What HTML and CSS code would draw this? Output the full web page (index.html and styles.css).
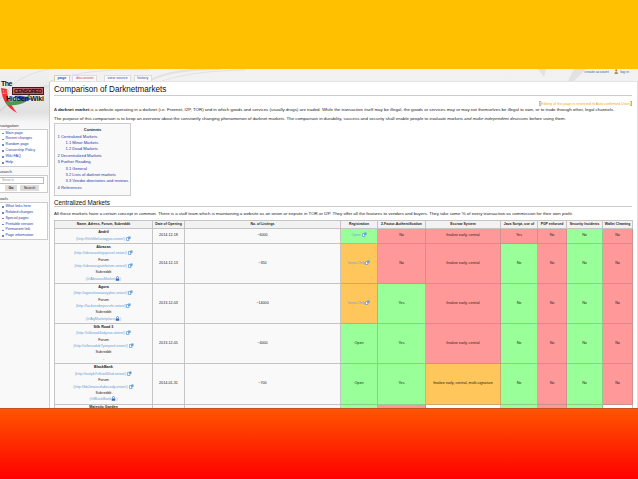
FILE: index.html
```html
<!DOCTYPE html>
<html>
  <head>
    <meta charset="utf-8">
    <meta name="viewport" content="width=device-width, initial-scale=1">
    <title>Comparison of Darknetmarkets</title>
    <link rel="stylesheet" href="styles.css">
  </head>
  <body>
    <svg class="defs" width="0" height="0">
      <symbol id="ext" viewBox="0 0 10 10">
        <path d="M1 3h5v6H1z" fill="#fff" stroke="#5b9bd5" stroke-width="1.4"/>
        <path d="M4 1h5v5L7.5 4.800 5 7 3.500 5.500 6 3z" fill="#5a98d8"/>
      </symbol>
      <symbol id="lock" viewBox="0 0 10 10">
        <path d="M3 5V3a2 2 0 0 1 4 0v2" fill="none" stroke="#4a80b8" stroke-width="1.4"/>
        <path d="M1.500 5h7v4.500h-7z" fill="#2f6fb0"/>
      </symbol>
    </svg>
    <div class="slide">
      <div class="band_top"></div>

      <div class="wiki">
        <svg class="swirl" viewBox="0 0 638 52" width="638" height="52">
          <g fill="none" stroke="#e2e2e2">
            <path d="M50 12C80 2 110 0 150 1"/>
            <path d="M148 12C165 4 185 0 220 0" stroke-width="2"/>
            <path d="M162 12C185 5 205 2 245 1"/>
            <path d="M0 30C14 10 30 4 50 0"/>
            <path d="M0 42C20 24 34 18 50 17" stroke-width="2"/>
          </g>
          <path d="M538 0h8l-2 8zM574 0h12l-12 12h-6z" fill="#e2e2e2"/>
        </svg>

        <!-- sidebar -->
        <div class="sidebar">
          <div class="logo">
            <svg viewBox="0 0 50 40" width="50" height="40">
              <path d="M1 9C2 22 8 29 17 34C10 25 7 18 7 10z" fill="#e33"/>
              <path d="M5 23C16 22 26 21 30 14C31 22 22 27 8 26z" fill="#4a9a50"/>
              <path d="M14 17C22 16 28 18 32 20L24 23z" fill="#4858b0"/>
              <rect x="12.500" y="8.500" width="31" height="7" fill="#b86468" stroke="#431a1c"/>
              <text x="14" y="14.200" textLength="28" class="logo_stamp">CENSORED</text>
              <text x="1" y="7.400" textLength="11.500" class="logo_txt">The</text>
              <text x="2" y="14.600" class="logo_17">1/2</text>
              <text x="6" y="22.400" textLength="38" class="logo_txt">Hidden Wiki</text>
            </svg>
          </div>
          <div class="side_title">navigation</div>
          <ul class="side_box">
            <li>Main page</li>
            <li>Recent changes</li>
            <li>Random page</li>
            <li>Censorship Policy</li>
            <li>Wiki FAQ</li>
            <li>Help</li>
          </ul>
          <div class="side_title">search</div>
          <div class="side_box side_search">
            <div class="search_input">Search</div>
            <div class="search_btns"><span class="btn btn_go">Go</span><span class="btn">Search</span></div>
          </div>
          <div class="side_title">tools</div>
          <ul class="side_box">
            <li>What links here</li>
            <li>Related changes</li>
            <li>Special pages</li>
            <li>Printable version</li>
            <li>Permanent link</li>
            <li>Page information</li>
          </ul>
        </div>

        <!-- page -->
        <div class="main">
          <div class="head">
            <div class="tabs">
              <span class="tab tab_on">page</span>
              <span class="tab tab_new">discussion</span>
              <span class="tab tab_source">view source</span>
              <span class="tab">history</span>
            </div>
            <div class="personal">
              <span>create account</span>
              <svg viewBox="0 0 10 12" width="4.500" height="5.500"><circle cx="5" cy="3" r="2.500" fill="#b98b4a"/><path d="M1 11c0-7 8-7 8 0z" fill="#a89060"/></svg>
              <span>log in</span>
            </div>
          </div>
          <div class="content">
            <h1>Comparison of Darknetmarkets</h1>
            <div class="notice"><b>[</b>Editing of this page is restricted to Auto confirmed Users<b>]</b></div>
            <p class="intro">A <b>darknet market</b> is a website operating in a darknet (i.e. Freenet, I2P, TOR) and in which goods and services (usually drugs) are traded. While the transaction itself may be illegal, the goods or services may or may not themselves be illegal to own, or to trade through other, legal channels.</p>
            <p class="purpose">The purpose of this comparison is to keep an overview about the constantly changing phenomenon of darknet markets. The comparison in durability, success and security shall enable people to evaluate markets <i>and make independent decisions</i> before using them.</p>
            <div class="toc">
              <div class="toc_title">Contents</div>
              <div>1 Centralized Markets</div>
              <div class="sub">1.1 Minor Markets</div>
              <div class="sub">1.2 Dead Markets</div>
              <div>2 Decentralized Markets</div>
              <div>3 Further Reading</div>
              <div class="sub">3.1 General</div>
              <div class="sub">3.2 Lists of darknet markets</div>
              <div class="sub">3.3 Vendor directories and reviews</div>
              <div>4 References</div>
            </div>
            <h2>Centralized Markets</h2>
            <p class="about">All these markets have a certain concept in common. There is a staff team which is maintaining a website as an onion or eepsite in TOR or I2P. They offer all the features to vendors and buyers. They take some % of every transaction as commission for their own profit.</p>
            <table class="markets">
              <colgroup>
                <col class="c_name"><col class="c_date"><col class="c_num"><col class="c_reg"><col class="c_fac">
                <col class="c_esc"><col class="c_js"><col class="c_pgp"><col class="c_sec"><col class="c_wal">
              </colgroup>
              <tr class="r_head">
                <th>Name, Adress, Forum, Subreddit</th><th>Date of Opening</th><th>No. of Listings</th><th>Registration</th><th>2-Factor-Authentification</th>
                <th>Escrow System</th><th>Java Script, use of</th><th>PGP enforced</th><th>Security Incidents</th><th>Wallet Cleaning</th>
              </tr>
              <tr class="r_short">
                <td><b>Andril</b><br><a>(http://hhhf6elseaqgox.onion/) <svg><use href="#ext"/></svg></a></td>
                <td>2014-12-18</td><td>~6000</td><td class="yes"><a>Open <svg><use href="#ext"/></svg></a></td><td class="no">No</td>
                <td class="no">finalize early, central</td><td class="no">Yes</td><td class="no">No</td><td class="yes">No</td><td class="no">No</td>
              </tr>
              <tr class="r_tall">
                <td><b>Abraxas</b><br><a>(http://abraxasdegupusel.onion/) <svg><use href="#ext"/></svg></a><br>Forum<br><a>(http://abraxasgateforum.onion/) <svg><use href="#ext"/></svg></a><br>Subreddit<br><a>(/r/AbraxasMarket<svg><use href="#lock"/></svg>)</a></td>
                <td>2014-12-13</td><td>~350</td><td class="part"><a>Invite-Only<svg><use href="#ext"/></svg></a></td><td class="no">No</td>
                <td class="no">finalize early, central</td><td class="yes">No</td><td class="no">No</td><td class="yes">No</td><td class="no">No</td>
              </tr>
              <tr class="r_tall">
                <td><b>Agora</b><br><a>(http://agorahooawayyfoe.onion/) <svg><use href="#ext"/></svg></a><br>Forum<br><a>(http://lacbzxobeprssrfx.onion/)<svg><use href="#ext"/></svg></a><br>Subreddit<br><a>(/r/AgMarketplace<svg><use href="#lock"/></svg>)</a></td>
                <td>2013-12-03</td><td>~14000</td><td class="part"><a>Invite-Only<svg><use href="#ext"/></svg></a></td><td class="yes">Yes</td>
                <td class="no">finalize early, central</td><td class="yes">No</td><td class="no">No</td><td class="yes">No</td><td class="no">No</td>
              </tr>
              <tr class="r_tall">
                <td><b>Silk Road 3</b><br><a>(http://silkroad4xdyzux.onion/) <svg><use href="#ext"/></svg></a><br>Forum<br><a>(http://silkroadvb7yvnpoof.onion/) <svg><use href="#ext"/></svg></a><br>Subreddit<br>-</td>
                <td>2013-12-05</td><td>~4000</td><td class="yes">Open</td><td class="yes">Yes</td>
                <td class="no">finalize early, central</td><td class="yes">No</td><td class="no">No</td><td class="yes">No</td><td class="no">No</td>
              </tr>
              <tr class="r_last">
                <td><b>BlackBank</b><br><a>(http://wztyb7vlfcw6l4xd.onion/) <svg><use href="#ext"/></svg></a><br>Forum<br><a>(http://bb2mwocdabesedy.onion/) <svg><use href="#ext"/></svg></a><br>Subreddit<br><a>(/r/BlackBank<svg><use href="#lock"/></svg>)</a></td>
                <td>2014-01-31</td><td>~700</td><td class="yes">Open</td><td class="yes">Yes</td>
                <td class="part">finalize early, central, multi-signature</td><td class="yes">No</td><td class="no">No</td><td class="yes">No</td><td class="no">No</td>
              </tr>
              <tr class="r_cut">
                <td><b>Majestic Garden</b></td><td></td><td></td><td class="yes"></td><td class="no"></td>
                <td class="blank"></td><td class="yes"></td><td class="no"></td><td class="yes"></td><td class="blank"></td>
              </tr>
            </table>
          </div>
        </div>
      </div>

      <div class="band_bottom"></div>
    </div>
  </body>
</html>
```

FILE: styles.css
```css
html, body{
  margin: 0;
  padding: 0;
  height: 100%;
  overflow: hidden;
}
.defs{
  position: absolute;
}
.slide{
  width: 638px;
  height: 479px;
  display: flex;
  flex-direction: column;
  font-family: "Liberation Sans", Arial, sans-serif;
  font-size: 4.4px;
  color: #222;
}
.band_top{
  height: 69px;
  background: #FFC000;
}
.band_bottom{
  flex: 1;
  background: linear-gradient(#FF5500, #FF0000);
}
.wiki{
  position: relative;
  height: 339px;
  display: flex;
  overflow: hidden;
  background: #f9f9f9 linear-gradient(#f1f1f1, #f4f4f4 50px, #f9f9f9 60px) no-repeat;
  border-bottom: 1px solid #c85020;
}
.swirl{
  position: absolute;
  left: 0;
  top: 0;
}
.sidebar{
  position: relative;
  width: 49px;
  flex: none;
  overflow: hidden;
  color: #333;
}
.logo{
  height: 53.5px;
  padding-top: 10px;
  box-sizing: border-box;
  background: linear-gradient(rgba(255,255,255,0), rgba(190,190,190,.35) 44px, rgba(249,249,249,0) 53px);
}
.logo svg{
  display: block;
}
.logo_txt{
  font-size: 7px;
  font-weight: bold;
  fill: #111;
}
.logo_stamp{
  font-size: 5.6px;
  font-weight: bold;
  fill: #1c0505;
}
.logo_17{
  font-size: 5.5px;
  fill: #f0a0a0;
}
.side_title{
  height: 6px;
  line-height: 6px;
  margin-left: -1px;
  font-size: 4.3px;
}
.side_box{
  margin: 0 0 2.5px -2px;
  padding: 1px 0 0;
  width: 47.5px;
  border: 1px solid #ccc;
  background: #fff;
  list-style: none;
  color: #2438a8;
  font-size: 3.7px;
}
.side_box li{
  height: 5.9px;
  line-height: 5.9px;
  padding-left: 6.5px;
  white-space: nowrap;
}
.side_box li::before{
  content: '';
  float: left;
  width: 1.6px;
  height: 1.6px;
  margin: 2.2px 0 0 -3.5px;
  background: #6a86c8;
}
.side_search{
  height: 15px;
}
.search_input{
  width: 41px;
  height: 4.5px;
  line-height: 4.5px;
  padding-left: 2px;
  border: 1px solid #bbb;
  color: #999;
}
.search_btns{
  display: flex;
  gap: 3px;
  padding: 1px 0 0 6px;
}
.btn{
  width: 19px;
  height: 6px;
  line-height: 6px;
  text-align: center;
  background: #ddd;
  color: #222;
}
.btn_go{
  width: 12px;
  font-weight: bold;
}
.main{
  position: relative;
  flex: 1;
  min-width: 0;
  display: flex;
  flex-direction: column;
}
.head{
  flex: none;
  height: 12px;
  display: flex;
  justify-content: space-between;
}
.tabs{
  display: flex;
  align-items: flex-end;
  gap: 2.5px;
  padding-left: 5px;
}
.tab{
  height: 5.5px;
  line-height: 5.5px;
  padding: 0 2.5px;
  border: 1px solid #ddd;
  border-bottom: none;
  background: #fafafa;
  color: #3a4cab;
  font-size: 3.8px;
}
.tab_on{
  border-color: #f0c890;
  font-weight: bold;
  background: #fff;
}
.tab_new{
  color: #c44;
}
.tab_source{
  margin-left: 4.5px;
}
.personal{
  display: flex;
  gap: 2px;
  height: 6px;
  line-height: 6px;
  padding-right: 9px;
  font-size: 3.7px;
  color: #2a7090;
}
.personal svg{
  margin-left: 3px;
}
.content{
  flex: 1;
  min-height: 0;
  padding: 0 5px 0 4px;
  border-left: 1px solid #ccc;
  border-top: 1px solid #e4e4e4;
  border-right: 1px solid #ddd;
  background: #fff;
}
.content p{
  margin: 0;
  white-space: nowrap;
}
h1{
  margin: 0;
  height: 13px;
  line-height: 15px;
  border-bottom: 1px solid #ccc;
  font-size: 8.15px;
  font-weight: normal;
  color: #111;
}
.notice{
  height: 6px;
  line-height: 6px;
  margin-top: 4px;
  text-align: right;
  font-size: 3.6px;
  color: #f5a623;
  white-space: nowrap;
}
.notice b{
  color: #a06a10;
  font-size: 5px;
}
.content .intro, .content .purpose{
  height: 8.5px;
  line-height: 8.5px;
}
.toc{
  width: 75px;
  height: 70.5px;
  border: 1px solid #ccc;
  background: #f9f9f9;
  color: #2438a8;
  font-size: 4.1px;
}
.toc div{
  height: 6.4px;
  line-height: 6.4px;
  padding-left: 2.5px;
  white-space: nowrap;
}
.toc .sub{
  padding-left: 10.5px;
}
.toc .toc_title{
  height: 9.6px;
  line-height: 11px;
  padding-left: 0;
  text-align: center;
  color: #222;
  font-weight: bold;
  font-size: 4px;
}
h2{
  margin: 0;
  height: 10.5px;
  line-height: 13px;
  border-bottom: 1px solid #ccc;
  font-size: 6.3px;
  font-weight: normal;
  color: #111;
}
.content .about{
  height: 12.5px;
  line-height: 13px;
}
.markets{
  width: 578px;
  table-layout: fixed;
  border-collapse: collapse;
  background: #f9f9f9;
  font-size: 3.7px;
  line-height: 6.4px;
  text-align: center;
}
.markets th, .markets td{
  padding: 0;
  border: 1px solid #c4c4c4;
  overflow: hidden;
  white-space: nowrap;
}
.markets th{
  background: #f2f2f2;
  font-size: 3.45px;
}
.markets a{
  color: #6a9fd8;
}
.markets svg{
  width: 5px;
  height: 5px;
  vertical-align: -1px;
}
.markets .yes{
  background: #99ff99;
  border-color: #8ccf8c;
}
.markets .no{
  background: #ff9999;
  border-color: #d09090;
}
.markets .part{
  background: #ffc65c;
  border-color: #cfa868;
}
.markets .blank{
  background: #fff;
}
.c_name{ width: 98px; }
.c_date{ width: 32px; }
.c_num{ width: 156px; }
.c_reg{ width: 37px; }
.c_fac{ width: 48px; }
.c_esc{ width: 75px; }
.c_js{ width: 37px; }
.c_pgp{ width: 29px; }
.c_sec{ width: 36px; }
.c_wal{ width: 30px; }
.r_head{ height: 8px; }
.r_short{ height: 15px; }
.r_tall{ height: 40px; }
.r_last{ height: 41px; }
.r_cut{ height: 12px; }
.r_cut td{
  vertical-align: top;
  line-height: 4px;
}
```
